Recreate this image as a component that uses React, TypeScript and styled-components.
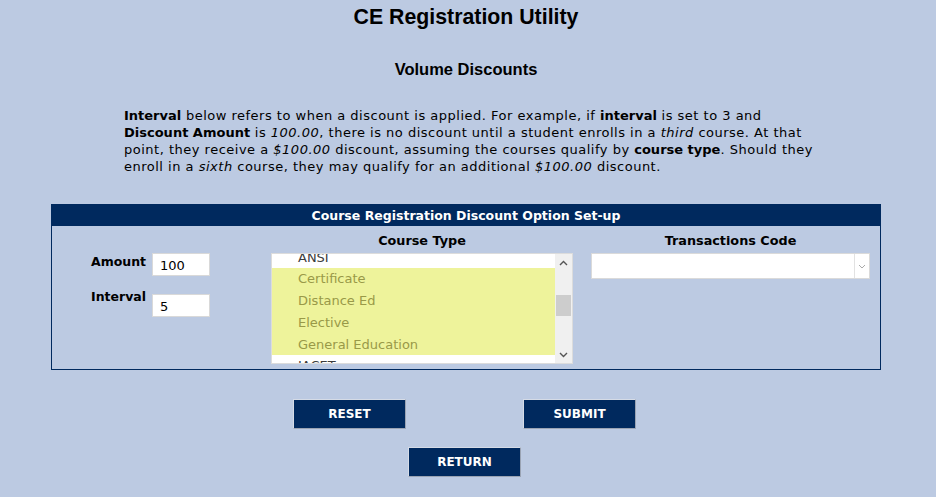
import React from 'react'
import styled, { createGlobalStyle } from 'styled-components'

const navy = '#00295e'
const pageBg = '#bccae2'
const bodyFont = `"DejaVu Sans", Verdana, sans-serif`
const headFont = `Arial, "Liberation Sans", sans-serif`

const GlobalStyle = createGlobalStyle`
  html, body {
    margin: 0;
    padding: 0;
    background: ${pageBg};
  }
  body {
    font-family: ${bodyFont};
    font-size: 12.5px;
    color: #000;
  }
`

const courseTypes = [
  { name: 'ANSI', selected: false },
  { name: 'Certificate', selected: true },
  { name: 'Distance Ed', selected: true },
  { name: 'Elective', selected: true },
  { name: 'General Education', selected: true },
  { name: 'IACET', selected: false },
]

export default function App() {
  return (
    <>
      <GlobalStyle />
      <Page>
        <Title>CE Registration Utility</Title>
        <Subtitle>Volume Discounts</Subtitle>
        <Intro>
          <b>Interval</b> below refers to when a discount is applied. For example, if{' '}
          <b>interval</b> is set to 3 and <b>Discount Amount</b> is <i>100.00</i>, there is
          no discount until a student enrolls in a <i>third</i> course. At that point, they
          receive a <i>$100.00</i> discount, assuming the courses qualify by{' '}
          <b>course type</b>. Should they enroll in a <i>sixth</i> course, they may qualify
          for an additional <i>$100.00</i> discount.
        </Intro>

        <Panel>
          <PanelHeader>Course Registration Discount Option Set-up</PanelHeader>
          <PanelBody>
            <span />
            <ColumnHead>Course Type</ColumnHead>
            <ColumnHead>Transactions Code</ColumnHead>

            <Fields>
              <FieldLabel>Amount</FieldLabel>
              <TextBox defaultValue="100" />
              <FieldLabel>Interval</FieldLabel>
              <TextBox defaultValue="5" $offset={6} />
            </Fields>

            <ListBox>
              <ListItems>
                {courseTypes.map((c) => (
                  <ListItem key={c.name} $selected={c.selected}>
                    {c.name}
                  </ListItem>
                ))}
              </ListItems>
              <ScrollTrack>
                <ScrollArrow>
                  <svg width="9" height="6" viewBox="0 0 9 6">
                    <path d="M1 5 L4.5 1.5 L8 5" fill="none" stroke="#555" strokeWidth="1.4" />
                  </svg>
                </ScrollArrow>
                <ThumbArea>
                  <Thumb />
                </ThumbArea>
                <ScrollArrow>
                  <svg width="9" height="6" viewBox="0 0 9 6">
                    <path d="M1 1 L4.5 4.5 L8 1" fill="none" stroke="#555" strokeWidth="1.4" />
                  </svg>
                </ScrollArrow>
              </ScrollTrack>
            </ListBox>

            <SelectBox>
              <SelectValue />
              <SelectArrow>
                <svg width="8" height="5" viewBox="0 0 8 5">
                  <path d="M1 1 L4 4 L7 1" fill="none" stroke="#aaa" strokeWidth="1" />
                </svg>
              </SelectArrow>
            </SelectBox>
          </PanelBody>
        </Panel>

        <ButtonRow $gap={117} $top={29}>
          <NavButton>RESET</NavButton>
          <NavButton>SUBMIT</NavButton>
        </ButtonRow>
        <ButtonRow $gap={0} $top={18}>
          <NavButton>RETURN</NavButton>
        </ButtonRow>
      </Page>
    </>
  )
}

const Page = styled.div`
  display: flex;
  flex-direction: column;
  align-items: center;
  padding: 5px 4px 20px 0;
`

const Title = styled.h1`
  margin: 0;
  font-family: ${headFont};
  font-size: 21.3px;
  line-height: 24px;
  font-weight: bold;
`

const Subtitle = styled.h2`
  margin: 31px 0 0;
  font-family: ${headFont};
  font-size: 16.5px;
  line-height: 18px;
  font-weight: bold;
`

const Intro = styled.p`
  margin: 29px 0 0;
  width: 690px;
  padding-left: 6px;
  font-size: 13px;
  line-height: 17px;
  letter-spacing: 0.5px;

  b {
    letter-spacing: 0;
  }
`

const Panel = styled.div`
  margin-top: 29px;
  width: 828px;
  border: 1px solid ${navy};
`

const PanelHeader = styled.div`
  background: ${navy};
  color: #fff;
  font-weight: bold;
  font-size: 12.5px;
  line-height: 21px;
  text-align: center;
`

const PanelBody = styled.div`
  display: grid;
  grid-template-columns: 201px 302px 279px;
  column-gap: 18px;
  row-gap: 4px;
  padding: 7px 10px 5px 0;
`

const ColumnHead = styled.div`
  font-weight: bold;
  font-size: 12.8px;
  line-height: 16px;
  text-align: center;
`

const Fields = styled.div`
  display: grid;
  grid-template-columns: 61px 58px;
  row-gap: 12px;
  align-items: start;
  padding-left: 39px;
  align-content: start;
`

const FieldLabel = styled.label`
  font-weight: bold;
  font-size: 12.5px;
  line-height: 16px;
  padding-top: 1px;
`

const TextBox = styled.input<{ $offset?: number }>`
  box-sizing: border-box;
  width: 58px;
  height: 23px;
  margin: ${({ $offset }) => $offset ?? 0}px 0 0;
  padding: 1px 7px 0;
  border: 1px solid #d9d9d9;
  background: #fff;
  font-family: ${bodyFont};
  font-size: 13px;
  color: #000;
  outline: none;
`

const ListBox = styled.div`
  box-sizing: border-box;
  height: 111px;
  border: 1px solid #dcdcdc;
  background: #fff;
  display: flex;
  overflow: hidden;
`

const ListItems = styled.ul`
  flex: 1;
  list-style: none;
  margin: -7.5px 0 0;
  padding: 0;
`

const ListItem = styled.li<{ $selected: boolean }>`
  height: 21.75px;
  line-height: 21.75px;
  padding-left: 26px;
  font-size: 13px;
  background: ${({ $selected }) => ($selected ? '#eef39b' : '#fff')};
  color: ${({ $selected }) => ($selected ? '#999948' : '#3c3c3c')};
`

const ScrollTrack = styled.div`
  width: 17px;
  background: #f0f0f0;
  display: flex;
  flex-direction: column;
`

const ScrollArrow = styled.div`
  height: 17px;
  display: flex;
  align-items: center;
  justify-content: center;
`

const ThumbArea = styled.div`
  flex: 1;
  padding-top: 24px;
  display: flex;
  justify-content: center;
`

const Thumb = styled.div`
  width: 15px;
  height: 21px;
  background: #cdcdcd;
`

const SelectBox = styled.div`
  box-sizing: border-box;
  height: 26px;
  border: 1px solid #dadada;
  background: #fff;
  display: flex;
`

const SelectValue = styled.div`
  flex: 1;
`

const SelectArrow = styled.div`
  width: 14px;
  border-left: 1px solid #e2e2e2;
  display: flex;
  align-items: center;
  justify-content: center;
`

const ButtonRow = styled.div<{ $gap: number; $top: number }>`
  display: flex;
  gap: ${({ $gap }) => $gap}px;
  margin-top: ${({ $top }) => $top}px;
  margin-right: 3px;
`

const NavButton = styled.button`
  box-sizing: border-box;
  width: 113px;
  height: 30px;
  background: ${navy};
  color: #fff;
  border: 1px solid #d5dbe6;
  border-right-color: #9aa3b3;
  border-bottom-color: #9aa3b3;
  font-family: ${bodyFont};
  font-weight: bold;
  font-size: 12px;
  cursor: pointer;
`
